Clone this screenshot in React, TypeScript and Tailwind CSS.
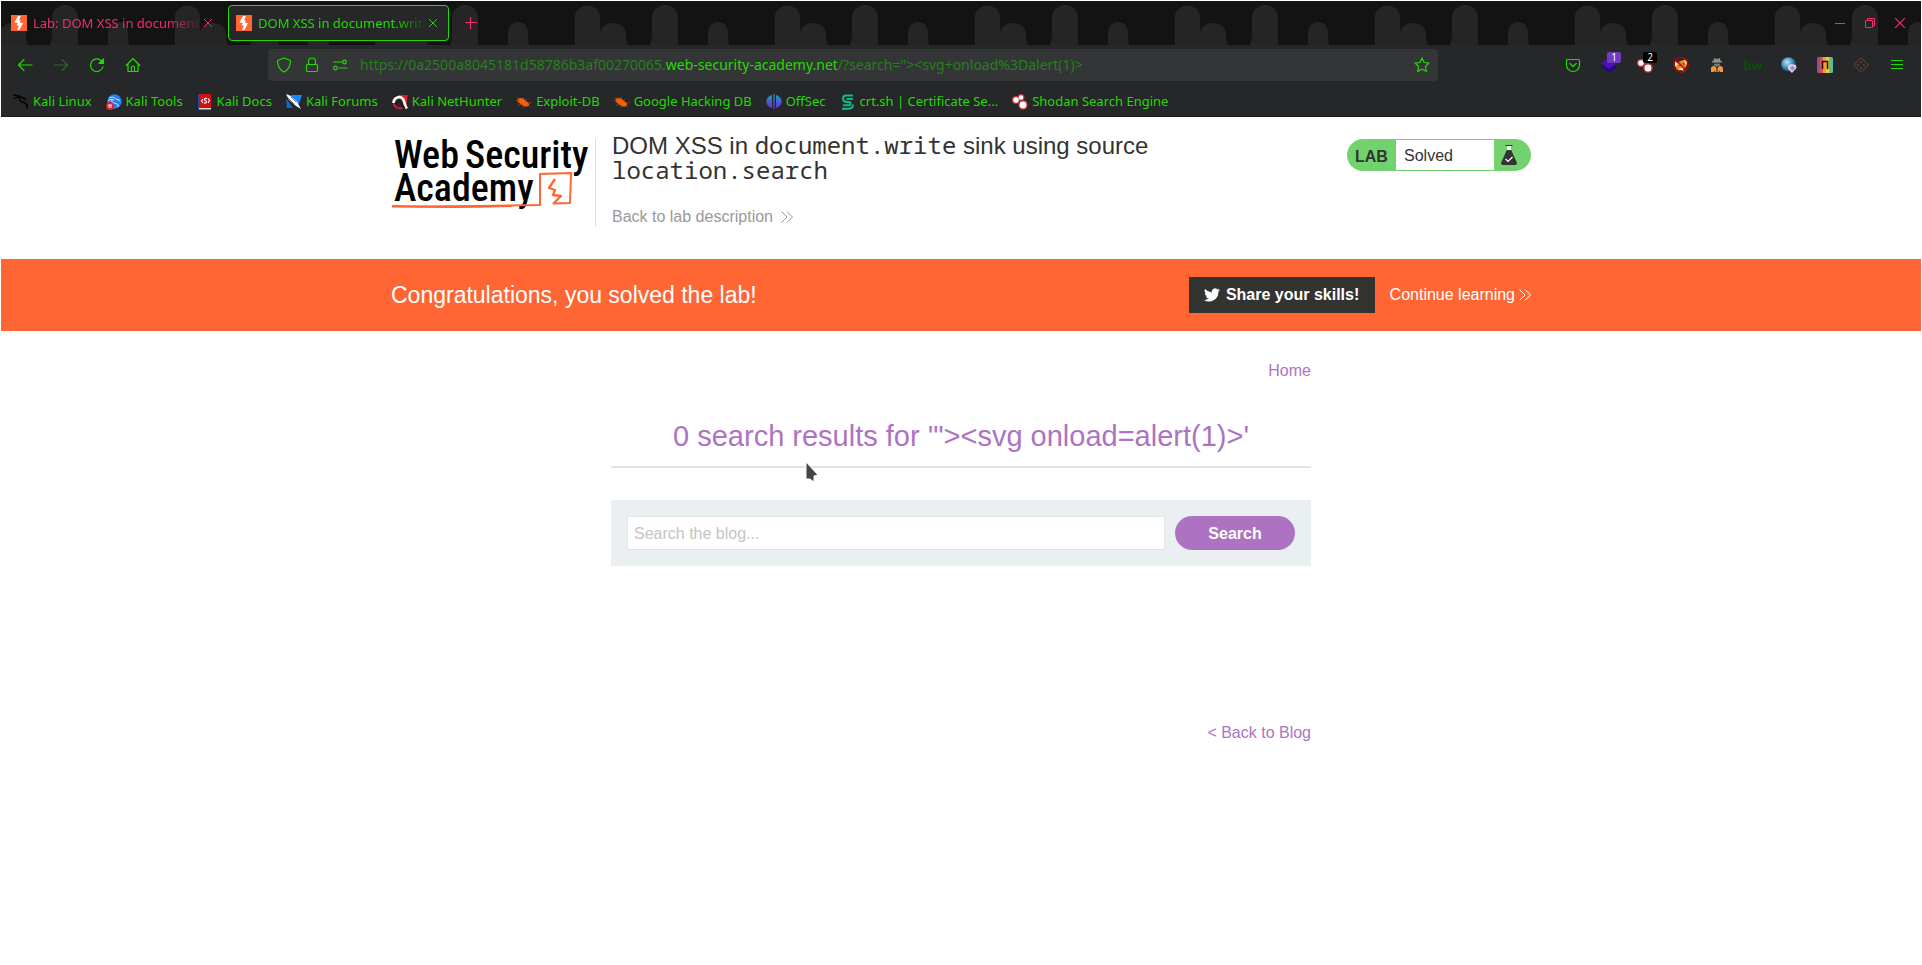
import type { ReactNode } from "react";

function LabFavicon() {
  return (
    <svg viewBox="0 0 16 16" className="size-4 shrink-0" aria-hidden="true">
      <rect width="16" height="16" fill="#ff6633" />
      <path d="M7 1h2.6L8.2 5.4h1.6l-1 2.4 3.4.3L8.4 15H6l2-4.5H5.6l1.2-2.6L3.4 7.6z" fill="#fff" />
    </svg>
  );
}

function Skyline() {
  return (
    <svg className="absolute inset-0 h-full w-full" aria-hidden="true">
      <defs>
        <pattern id="skyline" width="200" height="44" patternUnits="userSpaceOnUse" x="-1" y="0">
          <g fill="#252525">
            <path d="M175 44V14a13 13 0 0 1 25 0v30z" />
            <path d="M0 44V33a13 11 0 0 1 26 0q0 7 2 11z" />
            <path d="M50 44q2-4 2-12V17a13 13 0 0 1 26 0v27z" />
            <path d="M108 44V31a10 10 0 0 1 20 0q0 9 1 13z" />
          </g>
        </pattern>
      </defs>
      <rect width="100%" height="100%" fill="url(#skyline)" />
    </svg>
  );
}

function Cross({ className }: { className: string }) {
  return (
    <svg viewBox="0 0 10 10" className={className} fill="none" stroke="currentColor" aria-hidden="true">
      <path d="M1 1l8 8M9 1l-8 8" />
    </svg>
  );
}

function Tab({ title, active }: { title: string; active?: boolean }) {
  return (
    <div
      className={
        active
          ? "flex h-9 w-[221px] items-center rounded border border-[#21dc00] bg-[#252728] pl-[7px] pr-[9px] text-[#21dc00]"
          : "flex h-9 w-[221px] items-center rounded border border-transparent pl-[7px] pr-[9px] text-[#f52d6b]"
      }
    >
      <button className="flex min-w-0 flex-1 items-center gap-1.5 text-left">
        <LabFavicon />
        <span className="min-w-0 flex-1 overflow-hidden whitespace-nowrap pt-0.5 [mask-image:linear-gradient(to_right,black_80%,transparent)]">
          {title}
        </span>
      </button>
      <button aria-label="Close tab" className="flex h-5 w-3 items-center justify-center">
        <Cross className="size-[10px]" />
      </button>
    </div>
  );
}

function ToolButton({ label, dim, children }: { label: string; dim?: boolean; children: ReactNode }) {
  return (
    <button
      aria-label={label}
      className={
        dim
          ? "relative flex h-9 w-9 items-center justify-center text-[#286b21]"
          : "relative flex h-9 w-9 items-center justify-center text-[#21dc00]"
      }
    >
      {children}
    </button>
  );
}

function Line({ children, className = "size-4" }: { children: ReactNode; className?: string }) {
  return (
    <svg
      viewBox="0 0 16 16"
      className={className}
      fill="none"
      stroke="currentColor"
      strokeWidth="1.2"
      strokeLinecap="round"
      strokeLinejoin="round"
      aria-hidden="true"
    >
      {children}
    </svg>
  );
}

const bugIcon = (
  <>
    <path d="M2 5c2-2 5-1 7 1s5 3 4 5-5 2-7 0-6-3-4-6z" fill="#f2600f" />
    <path d="M0 6l4 1M1 3.500l3 2M7 3l1 3M11 5l-2 2M15.500 8.500L12 9M2 11.500l4-1.500M7 13.500l1-2M14 13l-2-2" stroke="#b84a10" strokeWidth=".7" />
  </>
);

const shodanIcon = (
  <>
    <g fill="#c5333a">
      <circle cx="4" cy="6" r="4" />
      <circle cx="9" cy="3.5" r="3.5" />
      <circle cx="11" cy="11" r="4.8" />
    </g>
    <g fill="#fff">
      <circle cx="4" cy="6" r="2.8" />
      <circle cx="9" cy="3.5" r="2.3" />
      <circle cx="11" cy="11" r="3.4" />
    </g>
  </>
);

const bookmarks: { name: string; icon: ReactNode }[] = [
  {
    name: "Kali Linux",
    icon: (
      <path
        d="M0 1c4 0 6 .5 8 2M1 4c3-1 5-1 8-.5s3 1 4 2.500M8 3.500c-2 1-2 4 1 4.500s5 1 5.500 4M13 6l-3-1M9 8c3 0 5 3 5.500 7"
        stroke="#050505"
        strokeWidth="1.300"
        fill="none"
      />
    ),
  },
  {
    name: "Kali Tools",
    icon: (
      <>
        <circle cx="8.500" cy="7.500" r="7.200" fill="#2b7de9" />
        <path d="M3 4c4-2 6 0 7 1s3 0 4 2M6 6c-1 3 3 3 5 4s1 2 1 3M2 7c2-2 4-2 6-1" stroke="#dcecff" strokeWidth="1" fill="none" />
        <circle cx="4" cy="12" r="4" fill="#d8262c" />
        <path d="M2 11h4M3.200 11v3M5 11v3" stroke="#fff" strokeWidth=".9" />
      </>
    ),
  },
  {
    name: "Kali Docs",
    icon: (
      <>
        <rect x="2" y="0" width="12" height="14" fill="#d40f14" />
        <rect x="1" y="0" width="2" height="15" fill="#174ea6" />
        <path d="M2 14h12v1.500H2z" fill="#d8dce6" />
        <path d="M6 5L4.500 7 6 9M11 4.500l1.500 2L11 9M10 4.500C7 4 7 6.500 8.500 6.800S10 9.500 7 9" stroke="#fff" strokeWidth="1.100" fill="none" />
      </>
    ),
  },
  {
    name: "Kali Forums",
    icon: (
      <>
        <path d="M5 1h11l-4 12z" fill="#1b86f5" />
        <path d="M0 4l7 10H1z" fill="#1b66c5" />
        <path d="M0 0l5 2 6 6 4 7-5-3-7-6z" fill="#fff" />
        <path d="M1 3l7 7M5 3l5 5" stroke="#3a4652" strokeWidth=".7" fill="none" />
      </>
    ),
  },
  {
    name: "Kali NetHunter",
    icon: (
      <>
        <path d="M6 1h9.500l-1 12z" fill="#e01f2c" />
        <path d="M1.500 9c0-5 6-8 9.500-4 2 3 1 6 4 9.500" stroke="#fff" strokeWidth="2.600" fill="none" />
        <path d="M4 10c1-3 4-3 5-1s1 4 4 5" stroke="#2a1216" strokeWidth="1.500" fill="none" />
        <path d="M1.500 9.500c1 4 5 5.500 9 4.500" stroke="#c51d3c" strokeWidth="2" fill="none" />
      </>
    ),
  },
  { name: "Exploit-DB", icon: bugIcon },
  { name: "Google Hacking DB", icon: bugIcon },
  {
    name: "OffSec",
    icon: (
      <>
        <defs>
          <linearGradient id="offsec" x1="0" y1="0" x2="0" y2="1">
            <stop offset="0" stopColor="#1c9bc4" />
            <stop offset="1" stopColor="#6a2bd9" />
          </linearGradient>
        </defs>
        <path d="M6 1v13C-1.500 12-1.500 3 6 1zM10 1v13c7.500-2 7.500-11 0-13zM7.300 0h1.400v15H7.300z" fill="url(#offsec)" />
      </>
    ),
  },
  {
    name: "crt.sh | Certificate Se...",
    icon: (
      <path
        d="M13 1.500H6Q3 1.500 3 4.500T6 8h3q1.500 0 1.500 1.700T9 11.300H3M2 14.800h6q5 0 5-4.300M13 5H8q-1.500 0-1.500-.5"
        stroke="#12b886"
        strokeWidth="2"
        fill="none"
      />
    ),
  },
  { name: "Shodan Search Engine", icon: shodanIcon },
];

function Badge({ children, className }: { children: ReactNode; className: string }) {
  return <span className={`absolute left-4 top-[5px] h-[11px] rounded-[2px] text-[10px] leading-[11px] text-white ${className}`}>{children}</span>;
}

function Extensions() {
  return (
    <>
      <ToolButton label="Save to Pocket">
        <Line>
          <path d="M2.500 2.500h11a1 1 0 0 1 1 1V8a6.500 6.500 0 0 1-13 0V3.500a1 1 0 0 1 1-1zM4.800 6.500L8 9.500l3.200-3" />
        </Line>
      </ToolButton>
      <ToolButton label="Layers">
        <svg viewBox="0 0 16 16" className="size-4" aria-hidden="true">
          <path d="M8 5l8 5-8 6-8-6z" fill="#240a80" />
          <path d="M8 1l8 5-8 6-8-6z" fill="#4a12b5" />
        </svg>
        <Badge className="w-[14px] bg-[#6f3cc0]">1</Badge>
      </ToolButton>
      <ToolButton label="Shodan">
        <svg viewBox="0 0 16 16" className="size-4" aria-hidden="true">
          {shodanIcon}
        </svg>
        <Badge className="w-[14px] bg-black">2</Badge>
      </ToolButton>
      <ToolButton label="Block cookies">
        <svg viewBox="0 0 16 16" className="size-4" aria-hidden="true">
          <path d="M3 8c2-4 5-4 10-6 2 4 1 8-2 10s-7 2-8-1z" fill="#e88a24" />
          <path d="M2 4l3 3-3 3zM11 3l3 2-1 3zM5 12l4-1 2 3z" fill="#f6e7d5" />
          <path d="M6 8l2 1M10 6l1 2" stroke="#5b2a08" />
          <circle cx="8" cy="8" r="7.300" fill="none" stroke="#c40000" strokeWidth="1.200" />
          <path d="M3 3l10 10" stroke="#c40000" strokeWidth="1.200" />
        </svg>
      </ToolButton>
      <ToolButton label="User agent">
        <svg viewBox="0 0 16 16" className="size-4" aria-hidden="true">
          <path d="M5 1l3 1 3-1 .5 3H13v1.500H3V4h1.500z" fill="#8e8e8e" />
          <path d="M5 5.500h6V8L8 10 5 8z" fill="#7b7b7b" />
          <path d="M5.500 6.500h2M8.500 6.500h2" stroke="#222" />
          <path d="M5 8.500l3 3 3-3 3 2V15h-3v-2l-1 2H6l-1-2v2H2v-4.500z" fill="#f0973a" />
          <path d="M8 11v5" stroke="#252728" />
        </svg>
      </ToolButton>
      <ToolButton label="Built with">
        <span className="font-['Lato'] text-sm font-black leading-none text-[#0d4d08]">bw</span>
      </ToolButton>
      <ToolButton label="Globe">
        <svg viewBox="0 0 16 16" className="size-4" aria-hidden="true">
          <defs>
            <radialGradient id="globe" cx=".4" cy=".35" r=".65">
              <stop offset="0" stopColor="#bfe6fa" />
              <stop offset=".55" stopColor="#4594c4" />
              <stop offset="1" stopColor="#123e63" />
            </radialGradient>
          </defs>
          <circle cx="7.500" cy="7.500" r="7.300" fill="url(#globe)" />
          <path d="M7 8.500l3-1.500 5 1 .5 3-4.500 5L7 12z" fill="#dcd0e6" />
          <path d="M9 10l3-1 2 2-3 3z" fill="#a687bb" />
        </svg>
      </ToolButton>
      <ToolButton label="Wappalyzer">
        <svg viewBox="0 0 16 16" className="size-4" aria-hidden="true">
          <defs>
            <clipPath id="rainbow-clip">
              <rect width="16" height="16" rx="1.500" />
            </clipPath>
          </defs>
          <g clipPath="url(#rainbow-clip)">
            <path d="M0 0h3v16H0z" fill="#8a4fa3" />
            <path d="M3 0h3v16H3z" fill="#e0504f" />
            <path d="M6 0h3v16H6z" fill="#f29a38" />
            <path d="M9 0h3v16H9z" fill="#e9cd45" />
            <path d="M12 0h2v16h-2z" fill="#6dbf67" />
            <path d="M14 0h2v16h-2z" fill="#55b8c8" />
          </g>
          <path d="M5.500 12V4.500h5V12" fill="none" stroke="#1a1210" strokeWidth="1.600" />
        </svg>
      </ToolButton>
      <ToolButton label="Diamond">
        <svg viewBox="0 0 16 16" className="size-4" aria-hidden="true">
          <path d="M8 .7L15.300 8 8 15.300.7 8z" fill="none" stroke="#74442f" />
          <path d="M8 4v2M8 10v2M4 8h2M10 8h2" stroke="#74442f" strokeWidth="1.500" />
        </svg>
      </ToolButton>
      <ToolButton label="Open menu">
        <svg viewBox="0 0 12 10" className="h-[10px] w-3" stroke="currentColor" aria-hidden="true">
          <path d="M0 .5h12M0 4.500h12M0 8.500h12" />
        </svg>
      </ToolButton>
    </>
  );
}

function BrowserChrome() {
  return (
    <header className="bg-[#252728] font-['Noto_Sans',sans-serif] text-[13px] text-[#21dc00]">
      <div className="relative h-11 bg-[#131313]">
        <Skyline />
        <div className="relative flex items-center gap-1 pl-0.5 pr-1.5 pt-1">
          <Tab title="Lab: DOM XSS in document.write sink" />
          <Tab title="DOM XSS in document.write sink" active />
          <button aria-label="New tab" className="flex size-9 items-center justify-center text-[#f52d6b]">
            <svg viewBox="0 0 12 12" className="size-3" stroke="currentColor" aria-hidden="true">
              <path d="M5.500 0v12M0 5.500h12" strokeWidth="1.200" />
            </svg>
          </button>
          <div className="ml-auto flex text-[#f52d6b]">
            <button aria-label="Minimize" className="flex h-9 w-[30px] items-center justify-center">
              <span className="h-px w-[10px] bg-current" />
            </button>
            <button aria-label="Restore" className="flex h-9 w-[30px] items-center justify-center">
              <svg viewBox="0 0 10 10" className="size-[10px]" fill="none" stroke="currentColor" aria-hidden="true">
                <path d="M.5 2.500h7v7h-7zM2.500 2.500v-2h7v7h-2" />
              </svg>
            </button>
            <button aria-label="Close window" className="flex h-9 w-[30px] items-center justify-center">
              <Cross className="size-3" />
            </button>
          </div>
        </div>
      </div>

      <nav className="flex h-10 items-center px-1.5">
        <ToolButton label="Back">
          <Line>
            <path d="M15 8H1.500M7 2.500L1.500 8 7 13.500" />
          </Line>
        </ToolButton>
        <ToolButton label="Forward" dim>
          <Line>
            <path d="M1 8h13.500M9 2.500L14.500 8 9 13.500" />
          </Line>
        </ToolButton>
        <ToolButton label="Reload">
          <Line>
            <path d="M14 9.500A6.300 6.300 0 1 1 12.500 4" />
            <path d="M14.500 2v4.500H10z" fill="currentColor" />
          </Line>
        </ToolButton>
        <ToolButton label="Home">
          <Line>
            <path d="M1.200 8.500L8 1.500l6.800 7M3 7v7.500h10V7M6.500 14.500v-4a1.500 1.500 0 0 1 3 0v4" />
          </Line>
        </ToolButton>
        <div className="mx-[117px] flex h-8 min-w-0 flex-1 items-center gap-3 rounded bg-[#343537] px-2">
          <Line>
            <path d="M8 1l6.500 2.500C14.500 9 12 13 8 15 4 13 1.500 9 1.500 3.500z" />
          </Line>
          <Line>
            <path d="M3.500 7.500h9a1 1 0 0 1 1 1v5a1 1 0 0 1-1 1h-9a1 1 0 0 1-1-1v-5a1 1 0 0 1 1-1zM4.500 7.500V4.500a3.500 3.500 0 0 1 7 0v3" />
          </Line>
          <Line>
            <path d="M1.500 5h8M7 11h8" />
            <circle cx="12.500" cy="5" r="1.800" />
            <circle cx="3.500" cy="11" r="1.800" />
          </Line>
          <div
            role="textbox"
            aria-label="Address"
            contentEditable
            suppressContentEditableWarning
            className="min-w-0 flex-1 overflow-hidden whitespace-nowrap text-sm text-[#26801b] outline-none"
          >
            https://0a2500a8045181d58786b3af00270065.<span className="text-[#21dc00]">web-security-academy.net</span>
            {'/?search="><svg+onload%3Dalert(1)>'}
          </div>
          <button aria-label="Bookmark this page">
            <Line>
              <path d="M8 1l2.100 4.500 4.900.6-3.600 3.400.9 4.900L8 12l-4.300 2.400.9-4.900L1 6.100l4.900-.6z" />
            </Line>
          </button>
        </div>
        <Extensions />
      </nav>

      <nav aria-label="Bookmarks" className="flex h-8 items-center gap-[14px] border-b border-[#181819] px-3 pt-0.5">
        {bookmarks.map((b) => (
          <a key={b.name} href="#" className="flex items-center gap-1 whitespace-nowrap">
            <svg viewBox="0 0 16 16" className="size-4" aria-hidden="true">
              {b.icon}
            </svg>
            {b.name}
          </a>
        ))}
      </nav>
    </header>
  );
}

function AcademyLogo() {
  return (
    <svg viewBox="0 0 200 76" className="h-[76px] w-[200px] overflow-visible" role="img" aria-label="Web Security Academy">
      <g fill="#000" fontFamily="'Roboto Condensed', Roboto, sans-serif" fontSize="38" fontWeight="500">
        <text x="3" y="29">Web</text>
        <text x="74" y="29">Security</text>
        <text x="3" y="62">Academy</text>
      </g>
      <g fill="none" stroke="#ff6633" strokeWidth="2" strokeLinejoin="round">
        <path d="M1 67.500q70 0 148-1.500V35l31-1-1 30-17 .5" />
        <path d="M1 67q60 2 120 0" />
        <path d="M164 40l-6 9 6 2-2 5 8 1-8 8" strokeWidth="2.300" />
      </g>
    </svg>
  );
}

function Chevrons() {
  return (
    <svg viewBox="0 0 12 12" className="size-3" fill="none" stroke="currentColor" aria-hidden="true">
      <path d="M.5.500L6 6 .5 11.500M6 .5L11.500 6 6 11.500" />
    </svg>
  );
}

function LabHeader() {
  return (
    <section className="mx-auto flex h-[142px] max-w-[1140px] items-start">
      <a href="#" className="mt-[22px] flex h-[88px] w-[205px] shrink-0 border-r border-[#dddddd]">
        <AcademyLogo />
      </a>
      <div className="ml-4 mt-4 w-[620px]">
        <h2 className="text-2xl leading-[25px]">
          DOM XSS in{" "}
          <code className="font-['Noto_Sans_Mono','DejaVu_Sans_Mono',monospace] leading-none">document.write</code> sink
          using source{" "}
          <code className="font-['Noto_Sans_Mono','DejaVu_Sans_Mono',monospace] leading-none">location.search</code>
        </h2>
        <a href="#" className="mt-[22px] flex items-center gap-2 leading-6 text-[#999999]">
          Back to lab description <Chevrons />
        </a>
      </div>
      <div className="ml-auto mt-[22px] flex h-8 w-[184px] items-stretch rounded-full bg-[#72d36e] py-px">
        <span className="w-[49px] pl-2 pt-0.5 font-bold leading-[30px]">LAB</span>
        <span className="w-[98px] bg-white pl-2 pt-px leading-[30px]">Solved</span>
        <svg viewBox="0 0 16 20" className="ml-[7px] mt-[5px] h-5 w-4" aria-hidden="true">
          <path d="M6 1h4v5H6z" fill="#fff" />
          <path d="M4.500.5h7" stroke="#333332" />
          <path d="M5.800 5h4.400L16 18q0 2-2 2H2q-2 0-2-2z" fill="#333332" />
          <path d="M4.500 14l2.500 2.500 4.500-4.500" fill="none" stroke="#fff" strokeWidth="1.200" />
        </svg>
      </div>
    </section>
  );
}

function SolvedBanner() {
  return (
    <section className="bg-[#ff6633] text-white">
      <div className="mx-auto flex h-[72px] max-w-[1140px] items-center">
        <h4 className="text-[23px]">Congratulations, you solved the lab!</h4>
        <button className="ml-auto flex h-9 w-[186px] items-center justify-center gap-1.5 bg-[#333332] font-bold">
          <svg viewBox="0 0 24 20" className="h-[14px] w-4" fill="currentColor" aria-hidden="true">
            <path d="M24 2.400a10 10 0 0 1-2.800.8A5 5 0 0 0 23.300.4a10 10 0 0 1-3.100 1.200 4.900 4.900 0 0 0-8.400 4.500A14 14 0 0 1 1.700 1a4.900 4.900 0 0 0 1.500 6.600A5 5 0 0 1 1 7a4.900 4.900 0 0 0 3.900 4.900 5 5 0 0 1-2.200.1 4.900 4.900 0 0 0 4.600 3.400A10 10 0 0 1 0 17.400 14 14 0 0 0 21.500 5a10 10 0 0 0 2.500-2.600z" />
          </svg>
          Share your skills!
        </button>
        <a href="#" className="ml-[15px] flex items-center gap-1">
          Continue learning <Chevrons />
        </a>
      </div>
    </section>
  );
}

function SearchResults() {
  return (
    <main className="mx-auto max-w-[700px] pt-7 leading-6">
      <nav className="flex justify-end text-[#ad73c2]">
        <a href="#">Home</a>
      </nav>
      <div className="relative mt-[34px] border-b-2 border-[#e4e4e4] pb-[11px]">
        <h1 className="text-center text-[29px] leading-[38px] text-[#ad73c2]">{`0 search results for '"><svg onload=alert(1)>'`}</h1>
        <svg viewBox="0 0 14 22" className="absolute left-[194px] top-[44px] h-[22px] w-[14px]" aria-hidden="true">
          <path d="M1 1v17h4l4 3v-6l4-1z" fill="#444" stroke="#fff" strokeWidth="1" />
        </svg>
      </div>
      <form className="mt-8 flex gap-[10px] bg-[#eaf0f2] p-4" onSubmit={(e) => e.preventDefault()}>
        <input
          aria-label="Search the blog"
          placeholder="Search the blog..."
          className="h-[34px] min-w-0 flex-1 border border-[#e2e4e5] bg-white px-1.5 pt-0.5 placeholder:text-[#c4c4c4]"
        />
        <button className="h-[34px] w-[120px] rounded-full bg-[#ad73c2] pt-0.5 font-bold text-white">Search</button>
      </form>
      <div className="mt-[155px] flex justify-end text-[#ad73c2]">
        <a href="#">&lt; Back to Blog</a>
      </div>
    </main>
  );
}

export default function App() {
  return (
    <div className="min-h-screen bg-white px-px pt-px font-['Liberation_Sans',Arial,sans-serif] text-base text-[#333332]">
      <BrowserChrome />
      <LabHeader />
      <SolvedBanner />
      <SearchResults />
    </div>
  );
}
